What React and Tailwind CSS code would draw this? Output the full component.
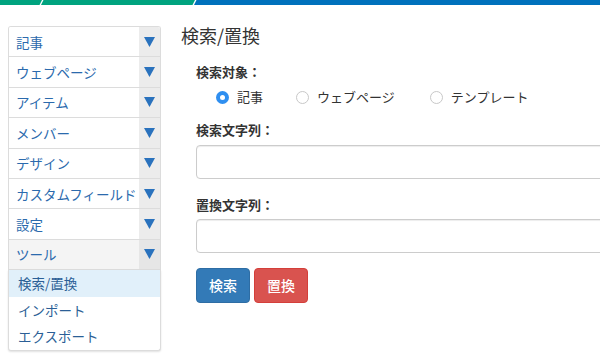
import React from 'react';

const menuItems = ['記事', 'ウェブページ', 'アイテム', 'メンバー', 'デザイン', 'カスタムフィールド', '設定'];
const subItems = ['検索/置換', 'インポート', 'エクスポート'];

const Arrow = () => (
  <svg width="11" height="10" viewBox="0 0 11 10">
    <polygon points="0,0 11,0 5.5,10" fill="#2a72bd" />
  </svg>
);

const MenuRow = ({ label, active }) => (
  <div className={`flex h-[30.4px] border-b border-[#dcdcdc] ${active ? 'bg-[#f4f4f4]' : 'bg-white'}`}>
    <div className="flex-1 flex items-center pl-[7px] text-[13.5px] text-[#2b6aad] whitespace-nowrap">{label}</div>
    <div className={`w-[21px] flex items-center justify-center ${active ? 'bg-[#e6e6e6]' : 'bg-[#ececec]'}`}>
      <Arrow />
    </div>
  </div>
);

const Radio = ({ label, checked }) => (
  <label className="flex items-center mr-[31px]">
    <span className={`w-[13px] h-[13px] rounded-full flex items-center justify-center ${checked ? 'bg-[#2f8ff0]' : 'border border-[#c8c8c8] bg-white'}`}>
      {checked && <span className="w-[5px] h-[5px] rounded-full bg-white" />}
    </span>
    <span className="ml-[8px] text-[13px] text-[#333]">{label}</span>
  </label>
);

export default function App() {
  return (
    <div className="w-[600px] h-[364px] overflow-hidden bg-white" style={{ fontFamily: '"Noto Sans CJK JP", "Liberation Sans", sans-serif' }}>
      <svg width="600" height="5" className="block">
        <polygon points="0,0 42,0 39.5,5 0,5" fill="#00a37f" />
        <polygon points="43.5,0 195,0 192.5,5 41,5" fill="#00a37f" />
        <polygon points="196.5,0 600,0 600,5 194,5" fill="#0071bc" />
      </svg>

      <div className="flex">
        {/* sidebar */}
        <div className="w-[161px] shrink-0 pl-[8px] pt-[21px]">
          <div className="border border-b-0 border-[#dcdcdc] rounded-t-[3px] overflow-hidden">
            {menuItems.map((m) => <MenuRow key={m} label={m} />)}
            <MenuRow label="ツール" active />
          </div>
          <div className="border border-t-0 border-[#dcdcdc] rounded-b-[3px] shadow-[0_1px_2px_rgba(0,0,0,0.12)] bg-white">
            {subItems.map((s, i) => (
              <div key={s} className={`h-[26.5px] flex items-center pl-[9px] text-[13.5px] text-[#2b5f96] ${i === 0 ? 'bg-[#e1f0fa]' : ''}`}>{s}</div>
            ))}
          </div>
        </div>

        {/* main */}
        <div className="flex-1 pl-[20px] pt-[18px]">
          <h2 className="text-[18px] leading-[24px] text-[#333]">検索/置換</h2>
          <div className="pl-[15px]">
            <div className="mt-[16px] text-[13px] font-bold leading-[18px] text-[#333]">検索対象：</div>
            <div className="flex mt-[7px] pl-[20px] h-[18px]">
              <Radio label="記事" checked />
              <div className="ml-[2px] flex"><Radio label="ウェブページ" /></div>
              <div className="ml-[4px] flex"><Radio label="テンプレート" /></div>
            </div>
            <div className="mt-[15px] text-[13px] font-bold leading-[18px] text-[#333]">検索文字列：</div>
            <div className="mt-[6px] w-[500px] h-[34px] border border-[#cccccc] rounded-[4px] shadow-[inset_0_1px_1px_rgba(0,0,0,0.075)]" />
            <div className="mt-[17px] text-[13px] font-bold leading-[18px] text-[#333]">置換文字列：</div>
            <div className="mt-[5px] w-[500px] h-[34px] border border-[#cccccc] rounded-[4px] shadow-[inset_0_1px_1px_rgba(0,0,0,0.075)]" />
            <div className="flex gap-[4px] mt-[15px]">
              <button className="w-[54px] h-[35px] rounded-[4px] bg-[#337ab7] border border-[#2e6da4] text-white text-[14px] font-medium">検索</button>
              <button className="w-[54px] h-[35px] rounded-[4px] bg-[#d9534f] border border-[#d43f3a] text-white text-[14px] font-medium">置換</button>
            </div>
          </div>
        </div>
      </div>
    </div>
  );
}
